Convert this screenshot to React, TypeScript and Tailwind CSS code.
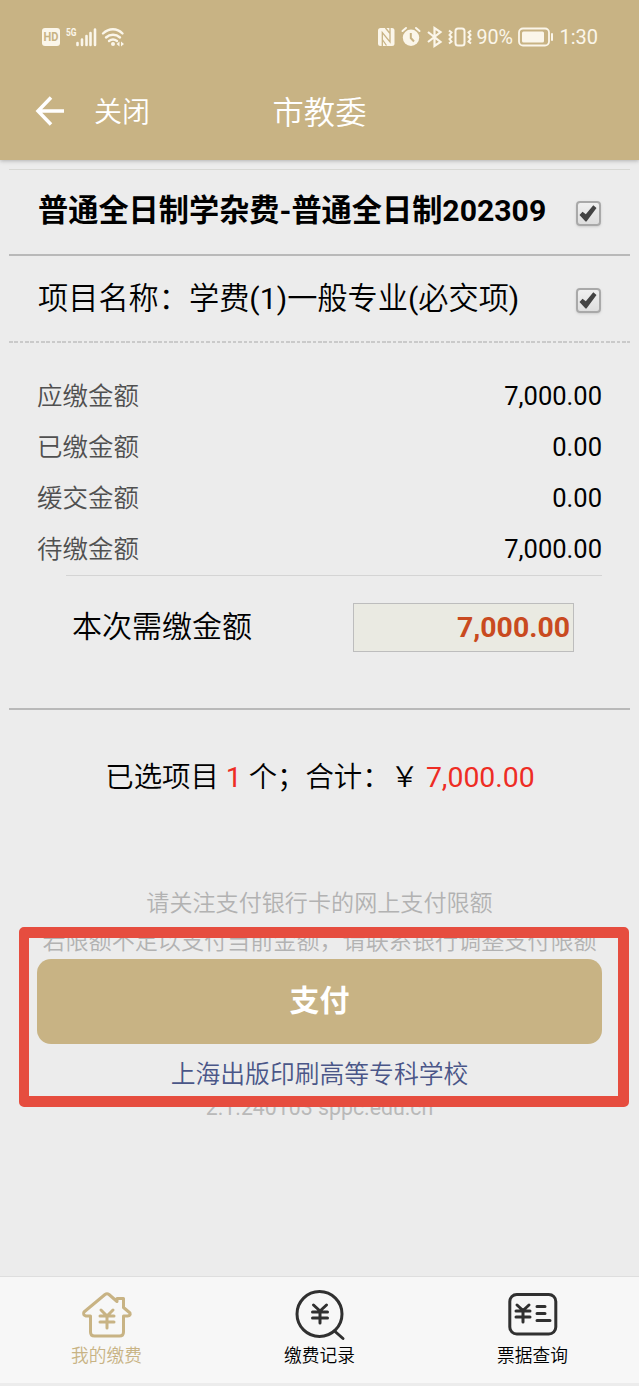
import type { ReactNode } from "react";

const amounts = [
  { label: "应缴金额", value: "7,000.00" },
  { label: "已缴金额", value: "0.00" },
  { label: "缓交金额", value: "0.00" },
  { label: "待缴金额", value: "7,000.00" },
];

function StatusBar() {
  return (
    <div className="flex h-[74px] items-center justify-between pl-[41px] pr-[41px] text-[#fbf6ea]">
      <svg width="86" height="24" viewBox="0 0 86 24" fill="none">
        <rect x="1" y="3" width="18" height="18" rx="3" fill="currentColor" />
        <text x="10" y="16.200" textAnchor="middle" fontSize="12" fontWeight="700" fontFamily="Roboto" fill="#c8b384" textLength="15" lengthAdjust="spacingAndGlyphs">
          HD
        </text>
        <text x="25" y="10.500" fontSize="11" fontWeight="700" fontFamily="Roboto" fill="currentColor" textLength="10.500" lengthAdjust="spacingAndGlyphs">
          5G
        </text>
        <path
          d="M36.500 18V20M41 14.500V20M45.500 11V20M49.500 8V20M54 4.500V20"
          stroke="currentColor"
          strokeWidth="2.600"
          strokeLinecap="round"
        />
        <path
          d="M62 8.500C68 2.800 76 2.800 81.500 8.500M65 12.500C69 8.800 75 8.800 79 12.500M68 16C70.500 14 73.500 14 76 16"
          stroke="currentColor"
          strokeWidth="2.400"
          strokeLinecap="round"
        />
        <circle cx="72" cy="19" r="2" fill="currentColor" />
        <path d="M78.500 16.500V21.500L75.500 19ZM80 16.500V21.500L83 19Z" fill="currentColor" />
      </svg>
      <div className="flex items-center">
        <svg width="98" height="24" viewBox="0 0 98 24" fill="none" stroke="currentColor">
          <rect x="0" y="3" width="16.500" height="18" rx="2.500" fill="currentColor" stroke="none" />
          <path d="M4.300 21V7.500L12 17V3M7.500 3L12 8.500M4.300 14.500L8.500 20.500" stroke="#c8b384" strokeWidth="1.300" />
          <circle cx="33" cy="12.800" r="8.200" fill="currentColor" stroke="none" />
          <path d="M24.500 6L28 3M41.500 6L38 3" strokeWidth="2" strokeLinecap="round" />
          <path d="M32.800 8V13L36 16.500" stroke="#c8b384" strokeWidth="2" />
          <path d="M50 7L62.500 17L56.500 21V3L62.500 7L50 17" strokeWidth="2.200" />
          <rect x="77.500" y="3.500" width="9" height="17" rx="2.500" strokeWidth="2" />
          <path
            d="M71 5.500L73.500 7.500L71.500 10L73.500 12L71.500 14L73.500 16.500L71 18.500M93 5.500L90.500 7.500L92.500 10L90.500 12L92.500 14L90.500 16.500L93 18.500"
            strokeWidth="2"
          />
        </svg>
        <span className="w-[39px] whitespace-nowrap pt-px text-[19.700px] leading-6">90%</span>
        <svg width="38" height="24" viewBox="0 0 38 24" fill="none" stroke="currentColor">
          <rect x="4" y="3.500" width="30" height="17" rx="4" strokeWidth="1.800" />
          <rect x="7" y="6.500" width="22" height="11" rx="1.500" fill="currentColor" stroke="none" />
          <path d="M37 9V15" strokeWidth="2" strokeLinecap="round" />
        </svg>
        <span className="ml-[6px] text-[20px] leading-6">1:30</span>
      </div>
    </div>
  );
}

function Checkbox() {
  return (
    <span className="mt-[2px] mr-[-1px] flex h-[25px] w-[25px] shrink-0 rounded-[4px] border-2 border-[#a9a9a9] bg-linear-to-b from-[#f0f0f0] to-[#dedede] shadow-sm">
      <svg width="21" height="21" viewBox="0 0 21 21">
        <path d="M1.500 12L4.500 8.800L7.800 11.300L15.300 2.300L18.500 5L8.500 18.500H7.500Z" fill="#434343" />
      </svg>
    </span>
  );
}

function Tab({ label, active, children }: { label: string; active?: boolean; children: ReactNode }) {
  return (
    <div className={`flex flex-1 flex-col items-center pt-[12px] ${active ? "text-[#c8b384]" : "text-[#303030]"}`}>
      <svg width="54" height="52" viewBox="0 0 54 52" fill="none" stroke="currentColor" strokeWidth="3" strokeLinecap="round" strokeLinejoin="round">
        {children}
      </svg>
      <span className={`mt-[3px] text-[17.700px] leading-6 font-[350] ${active ? "text-[#c8b384]" : "text-black"}`}>{label}</span>
    </div>
  );
}

export default function App() {
  return (
    <div className="flex h-[1386px] w-[639px] flex-col overflow-hidden bg-[#ececec] font-['Roboto','Noto_Sans_CJK_SC',sans-serif] text-black">
      <header className="h-[160px] shrink-0 bg-[#c8b384] text-white shadow-[0_1px_4px_rgba(0,0,0,0.25)]">
        <StatusBar />
        <div className="grid h-[74px] grid-cols-3 items-center">
          <div className="flex items-center pl-[35px]">
            <svg width="30" height="30" viewBox="0 0 30 30" fill="none" stroke="currentColor" strokeWidth="3.500">
              <path d="M16 1.500L3 15L16 28.500M3 15H29" />
            </svg>
            <span className="mt-[4px] ml-[29px] text-[28px] font-[350]">关闭</span>
          </div>
          <h1 className="pt-[6px] text-center text-[31.300px] font-[350]">市教委</h1>
        </div>
      </header>

      <main className="flex flex-1 flex-col px-[9px] pt-[9px]">
        <div className="flex h-[87px] items-center justify-between border-t border-b-2 border-t-[#d8d8d4] border-b-[#b9b9b9] pl-[29px] pr-[30px]">
          <h2 className="pb-[2px] text-[30.200px] font-bold whitespace-nowrap">普通全日制学杂费-普通全日制202309</h2>
          <Checkbox />
        </div>
        <div className="flex h-[85px] items-center justify-between pt-px pl-[29px] pr-[30px]">
          <span className="text-[30.200px] font-[350] whitespace-nowrap">
            项目名称：学费<span className="font-normal">(1)</span>一般专业<span className="font-normal">(</span>必交项
            <span className="font-normal">)</span>
          </span>
          <Checkbox />
        </div>
        <div className="h-[2px] bg-[repeating-linear-gradient(to_right,#cacaca_0_3.6px,transparent_3.6px_5.33px)]" />

        <div className="mt-[28px] pl-[28px] pr-[28px]">
          {amounts.map((item) => (
            <div key={item.label} className="flex h-[51px] items-center justify-between text-[25.500px]">
              <span className="font-[350] text-[#505050]">{item.label}</span>
              <span>{item.value}</span>
            </div>
          ))}
          <div className="ml-[29px] h-px bg-[#d4d4d4]" />
        </div>

        <div className="flex h-[134px] items-start justify-between border-b-2 border-[#b9b9b9] pt-[27px] pl-[63px] pr-[56px]">
          <span className="text-[30px] leading-[48px] font-[350]">本次需缴金额</span>
          <div className="h-[49px] w-[221px] border border-[#bdbdbd] bg-[#eaeae2] pr-[3px] text-right text-[28.400px] leading-[48px] font-bold text-[#c94a20]">
            7,000.00
          </div>
        </div>

        <p className="mt-[48px] ml-px text-center text-[28.400px] leading-10 font-[350] whitespace-pre">
          已选项目 <span className="font-normal text-[#ee2c24]">1</span> 个；合计：￥ <span className="font-normal text-[#ee2c24]">7,000.00</span>
        </p>

        <div className="relative mt-[86px] flex flex-col items-center px-[28px]">
          <p className="pt-px text-[23.100px] leading-[38px] font-[350] whitespace-nowrap text-[#b2b2b2]">请关注支付银行卡的网上支付限额</p>
          <p className="h-[36px] text-[23.100px] leading-[38px] font-[350] whitespace-nowrap text-[#b2b2b2]">若限额不足以支付当前金额，请联系银行调整支付限额</p>
          <button className="h-[85px] w-full rounded-[14px] bg-[#c8b384] pb-[3px] text-[30px] font-bold text-white">支付</button>
          <p className="mt-[13px] text-[24.800px] leading-[36px] font-[350] text-[#4a5688]">上海出版印刷高等专科学校</p>
          <p className="text-[21.300px] leading-[30px] text-[#b9b9b9]">2.1.240103 sppc.edu.cn</p>
          {/* Highlight around the pay button */}
          <div className="pointer-events-none absolute top-[43px] left-[10px] h-[180px] w-[610px] rounded-[5px] border-[11px] border-l-[10px] border-[#e64d3f]" />
        </div>
      </main>

      <nav className="mb-[3px] flex h-[107px] shrink-0 border-t border-[#dedede] bg-[#f7f7f7]">
        <Tab label="我的缴费" active>
          <path d="M10.500 43V27H6Q2.500 26 4 23L25 5.500Q27 4 29 5.500L37 12.500V9.500H43.500V18.500L50 24Q51 26.500 47.500 27H43.500V43Q43.500 47 39.500 47H14.500Q10.500 47 10.500 43Z" />
          <path d="M21 21L27 27L33 21M20 27H34M20 33H34M27 27V39" />
        </Tab>
        <Tab label="缴费记录">
          <circle cx="26.500" cy="25" r="22.500" />
          <path d="M41.500 42L50 49.500M20.500 16L27 22L33.500 16M19.500 23H34.500M19.500 29H34.500M27 22V34" />
        </Tab>
        <Tab label="票据查询">
          <rect x="3.800" y="5.500" width="46" height="39.500" rx="7" />
          <path d="M11 16L17 21.500L23 16M10 22H24M10 28H24M17 22V33M31 17.500H39M31 24.500H39M31 31.500H44" />
        </Tab>
      </nav>
    </div>
  );
}
